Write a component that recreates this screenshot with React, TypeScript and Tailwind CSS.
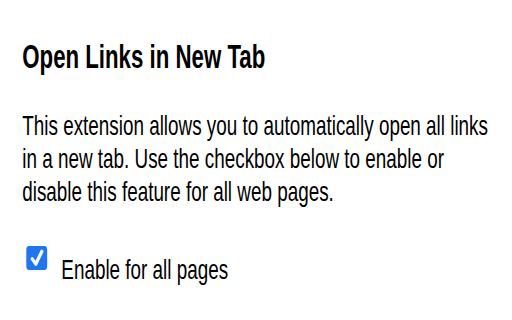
export default function App() {
  return (
    <div className="w-[512px] h-[320px] overflow-hidden bg-white">
      {/* screenshot text is horizontally condensed, so squeeze the whole panel */}
      <div
        className="w-[760px] origin-top-left scale-x-[0.674] pl-[33px] pt-[38px] text-black"
        style={{ fontFamily: '"Liberation Sans", Arial, sans-serif' }}
      >
        <h1 className="text-[33px] leading-[37px] font-bold">Open Links in New Tab</h1>
        <p className="mt-[34px] w-[700px] text-[28px] leading-[33px]">
          This extension allows you to automatically open all links in a new tab. Use the
          checkbox below to enable or disable this feature for all web pages.
        </p>
        <label className="mt-[38px] flex items-start">
          <span className="ml-[6px] flex h-[24px] w-[31px] items-center justify-center rounded-[4px] bg-[#1f76ee]">
            <svg viewBox="0 0 20 20" className="h-[20px] w-[26px]" preserveAspectRatio="none">
              <path d="M4.5 11 L8.5 16 L15.5 3.5" fill="none" stroke="white" strokeWidth="3.6" strokeLinecap="round" strokeLinejoin="round" />
            </svg>
          </span>
          <span className="ml-[21px] mt-[7px] text-[28px] leading-[33px]">Enable for all pages</span>
        </label>
      </div>
    </div>
  );
}
